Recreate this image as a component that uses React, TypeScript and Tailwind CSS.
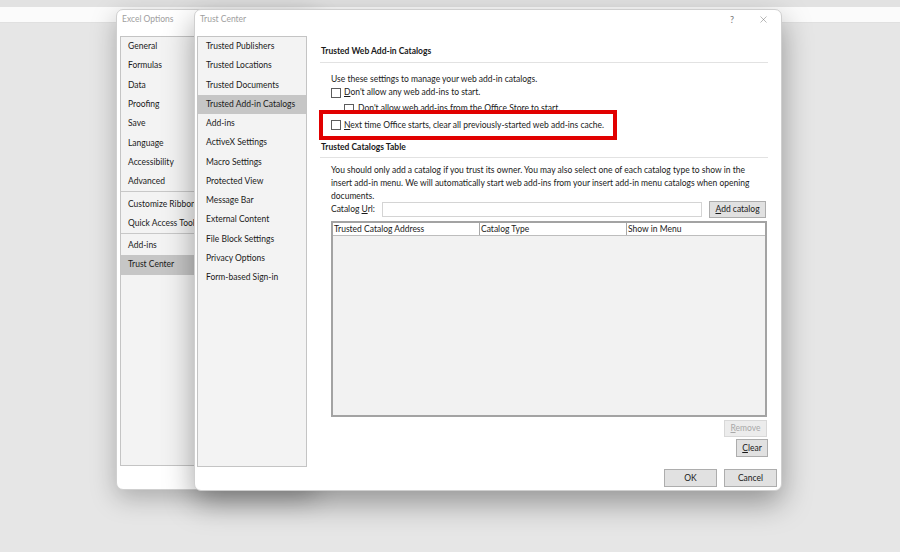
import { X } from "lucide-react";

const excelNav = [
  ["General", "Formulas", "Data", "Proofing", "Save", "Language", "Accessibility", "Advanced"],
  ["Customize Ribbon", "Quick Access Toolbar"],
  ["Add-ins", "Trust Center"],
];

const trustNav = [
  "Trusted Publishers",
  "Trusted Locations",
  "Trusted Documents",
  "Trusted Add-in Catalogs",
  "Add-ins",
  "ActiveX Settings",
  "Macro Settings",
  "Protected View",
  "Message Bar",
  "External Content",
  "File Block Settings",
  "Privacy Options",
  "Form-based Sign-in",
];

function Check() {
  return <span className="w-[10px] h-[10px] border border-[#5c5c5c] bg-white shrink-0" />;
}

function Btn({ children, w, disabled }: { children: React.ReactNode; w: string; disabled?: boolean }) {
  return (
    <div
      className={`${w} h-full flex items-center justify-center border ${
        disabled ? "border-[#d8d8d8] bg-[#ececec] text-[#a8a8a8]" : "border-[#adadad] bg-[#e1e1e1] text-[#1a1a1a]"
      }`}
    >
      {children}
    </div>
  );
}

export default function App() {
  return (
    <div className="relative w-[900px] h-[552px] overflow-hidden bg-[#e6e6e6] font-['Lato',sans-serif] text-[8.5px] text-[#1a1a1a] leading-[13px]">
      <div className="h-[7px] bg-[#e2e2e2]" />
      <div className="h-[16px] bg-[#fbfbfb] border-b border-[#e0e0e0]" />

      {/* Excel Options window */}
      <div className="absolute left-[116px] top-[9px] w-[200px] h-[481px] bg-white rounded-[7px] border border-[#cfcfcf] shadow-[0_8px_26px_rgba(0,0,0,0.26)] flex flex-col">
        <div className="h-[19px] pl-[5px] flex items-center text-[#a0a0a0]">Excel Options</div>
        <div className="mt-[7px] ml-[3px] w-[190px] h-[430px] bg-[#f3f3f3] border border-[#c4c4c4] flex flex-col">
          {excelNav.map((grp, gi) => (
            <div key={gi} className={gi > 0 ? "border-t border-[#c8c8c8] pt-[2px]" : ""}>
              {grp.map((t) => (
                <div
                  key={t}
                  className={`h-[19.3px] flex items-center pl-[7px] whitespace-nowrap ${
                    t === "Trust Center" ? "bg-[#c6c6c6]" : ""
                  }`}
                >
                  {t}
                </div>
              ))}
            </div>
          ))}
        </div>
      </div>

      {/* Trust Center window */}
      <div className="absolute left-[194px] top-[9px] w-[588px] h-[482px] bg-white rounded-[7px] border border-[#cfcfcf] shadow-[0_12px_30px_rgba(0,0,0,0.36)] flex flex-col">
        <div className="h-[19px] shrink-0 pl-[5px] pr-[12px] flex items-center text-[#a0a0a0]">
          <span className="flex-1">Trust Center</span>
          <span className="text-[9px] text-[#777] mr-[24px]">?</span>
          <X size={11} strokeWidth={1} color="#666" />
        </div>

        <div className="mt-[7px] flex h-[431px] shrink-0">
          <div className="ml-[2px] w-[110px] h-[431px] bg-[#f3f3f3] border border-[#c4c4c4] flex flex-col">
            {trustNav.map((t) => (
              <div
                key={t}
                className={`h-[19.25px] flex items-center pl-[8px] whitespace-nowrap ${
                  t === "Trusted Add-in Catalogs" ? "bg-[#c6c6c6]" : ""
                }`}
              >
                {t}
              </div>
            ))}
          </div>

          <div className="ml-[14px] w-[447px] flex flex-col">
            <div className="mt-[8px] h-[14px] flex items-center font-bold">Trusted Web Add-in Catalogs</div>
            <div className="mt-[4px] h-px bg-[#e2e2e2] -ml-[1px]" />
            <div className="mt-[10px] ml-[10px] h-[13px] flex items-center">Use these settings to manage your web add-in catalogs.</div>
            <div className="ml-[10px] h-[13px] flex items-center gap-[3px]">
              <Check />
              <span>
                <u>D</u>on't allow any web add-ins to start.
              </span>
            </div>
            <div className="mt-[3px] ml-[23px] h-[13px] flex items-center gap-[4px]">
              <Check />
              <span>Don't allow web add-ins from the Office Store to start.</span>
            </div>
            <div className="relative -mt-[5px] -ml-[2px] w-[298px] h-[30px] border-[4px] border-[#e10000] bg-white flex items-center pl-[8px] gap-[3px]">
              <Check />
              <span>
                <u>N</u>ext time Office starts, clear all previously-started web add-ins cache.
              </span>
            </div>
            <div className="h-[14px] flex items-center font-bold">Trusted Catalogs Table</div>
            <div className="mt-[3px] h-px bg-[#e2e2e2] -ml-[1px]" />
            <p className="mt-[6px] ml-[10px] leading-[13px]">
              You should only add a catalog if you trust its owner. You may also select one of each catalog type to show in the
              insert add-in menu. We will automatically start web add-ins from your insert add-in menu catalogs when opening
              documents.
            </p>
            <div className="-mt-[2px] ml-[10px] h-[17px] flex items-center">
              <span className="w-[51px]">
                Catalog <u>U</u>rl:
              </span>
              <div className="w-[320px] h-[15px] border border-[#d4d4d4] bg-white" />
              <div className="ml-[7px] h-[17px]">
                <Btn w="w-[57px]">
                  <span>
                    <u>A</u>dd catalog
                  </span>
                </Btn>
              </div>
            </div>
            <div className="mt-[3px] ml-[10px] w-[436px] h-[196px] border-2 border-[#a3a3a3] bg-[#f2f2f2] flex flex-col">
              <div className="h-[13px] bg-white flex border-b border-[#bdbdbd]">
                <div className="w-[147px] border-r border-[#a8a8a8] pl-[1px] flex items-center">Trusted Catalog Address</div>
                <div className="w-[147px] border-r border-[#a8a8a8] pl-[1px] flex items-center">Catalog Type</div>
                <div className="flex-1 pl-[1px] flex items-center">Show in Menu</div>
              </div>
            </div>
            <div className="mt-[3px] h-[17px] flex justify-end pr-[1px]">
              <Btn w="w-[43px]" disabled>
                <span>
                  <u>R</u>emove
                </span>
              </Btn>
            </div>
            <div className="mt-[2px] h-[18px] flex justify-end">
              <Btn w="w-[32px]">
                <span>
                  <u>C</u>lear
                </span>
              </Btn>
            </div>
          </div>
        </div>

        <div className="mt-[2px] h-[18px] flex justify-end gap-[7px] pr-[4px]">
          <Btn w="w-[53px]">OK</Btn>
          <Btn w="w-[53px]">Cancel</Btn>
        </div>
      </div>
    </div>
  );
}
